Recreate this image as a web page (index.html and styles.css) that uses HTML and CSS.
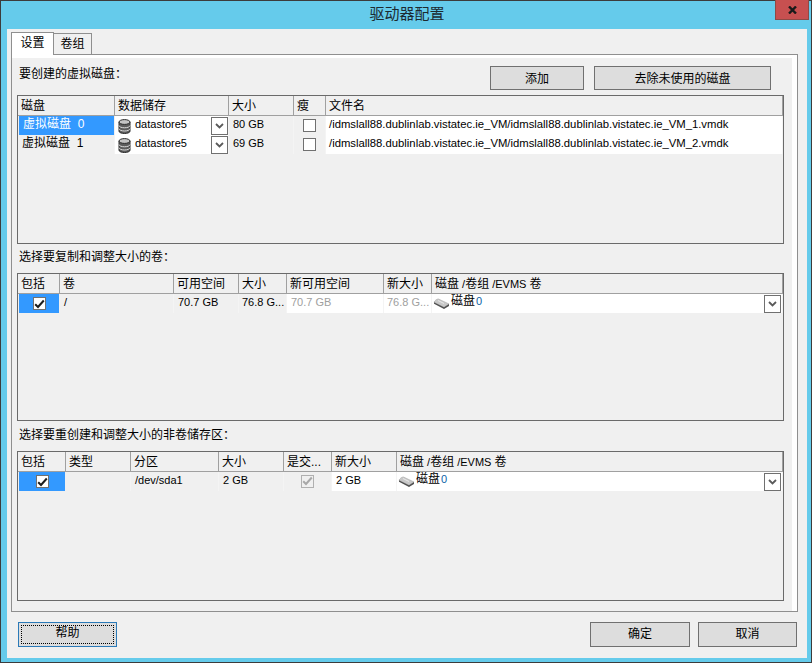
FILE: index.html
```html
<!DOCTYPE html>
<html lang="zh">
<head>
<meta charset="utf-8">
<title>驱动器配置</title>
<link rel="stylesheet" href="styles.css">
</head>
<body>
<svg class="defs" width="0" height="0">
  <defs>
    <symbol id="db" viewBox="0 0 13 15">
      <path d="M1 3v9.200c0 1.300 2.500 2.300 5.500 2.300s5.500-1 5.500-2.300V3z" fill="#5c5c5c" stroke="#2a2a2a"/>
      <ellipse cx="6.500" cy="3" rx="5.500" ry="2.400" fill="#c4c4c4" stroke="#2a2a2a"/>
      <path d="M1 6.500c0 1.300 2.500 2.300 5.500 2.300s5.500-1 5.500-2.300M1 9.700c0 1.300 2.500 2.300 5.500 2.300s5.500-1 5.500-2.300" fill="none" stroke="#dcdcdc"/>
    </symbol>
    <symbol id="hdd" viewBox="0 0 17 11">
      <path d="M1 4.200C2 2.500 3.500 1 5.500 1L16 6l-5 3.200z" fill="#c8c8c8" stroke="#a8a8a8" stroke-width=".6"/>
      <path d="M1 4.200v1.600L11 11l5-3V6l-5 3.200z" fill="#505050"/>
      <path d="M5 2.500l6 3" stroke="#e8e8e8" fill="none"/>
    </symbol>
    <symbol id="chev" viewBox="0 0 9 6">
      <path d="M1 1l3.500 3.500L8 1" fill="none" stroke="#5a5a5a" stroke-width="1.800"/>
    </symbol>
    <symbol id="tick" viewBox="0 0 11 10">
      <path d="M1.200 5.200 4 8 9.800 1.500" fill="none" stroke="currentColor" stroke-width="2"/>
    </symbol>
  </defs>
</svg>
<div class="window">
  <header class="titlebar">
    <h1 class="title">驱动器配置</h1>
    <div class="close"><svg width="9" height="8" viewBox="0 0 9 8"><path d="M1 .5l7 7M8 .5l-7 7" stroke="#1a1a1a" stroke-width="2.400" fill="none"/></svg></div>
  </header>
  <main class="client">
    <nav class="tabs">
      <div class="tab active">设置</div>
      <div class="tab">卷组</div>
    </nav>
    <section class="panel">
      <div class="panel-inner">
        <div class="top-row">
          <div class="label first">要创建的虚拟磁盘：</div>
          <button class="btn add">添加</button>
          <button class="btn remove">去除未使用的磁盘</button>
        </div>
        <div class="table t1">
          <div class="grid cols1">
            <div class="th">磁盘</div><div class="th">数据储存</div><div class="th">大小</div><div class="th">瘦</div><div class="th last">文件名</div>
            <div class="td sel disk-name">虚拟磁盘&nbsp; 0</div>
            <div class="td white store"><svg class="ic-db"><use href="#db"/></svg><span>datastore5</span><span class="drop"><svg class="ic-chev"><use href="#chev"/></svg></span></div>
            <div class="td num">80 GB</div>
            <div class="td center"><span class="cb"></span></div>
            <div class="td white path">/idmslall88.dublinlab.vistatec.ie_VM/idmslall88.dublinlab.vistatec.ie_VM_1.vmdk</div>
            <div class="td disk-name">虚拟磁盘&nbsp; 1</div>
            <div class="td white store"><svg class="ic-db"><use href="#db"/></svg><span>datastore5</span><span class="drop"><svg class="ic-chev"><use href="#chev"/></svg></span></div>
            <div class="td num">69 GB</div>
            <div class="td center"><span class="cb"></span></div>
            <div class="td white path">/idmslall88.dublinlab.vistatec.ie_VM/idmslall88.dublinlab.vistatec.ie_VM_2.vmdk</div>
          </div>
        </div>
        <div class="label second">选择要复制和调整大小的卷：</div>
        <div class="table t2">
          <div class="grid cols2">
            <div class="th">包括</div><div class="th">卷</div><div class="th">可用空间</div><div class="th">大小</div><div class="th">新可用空间</div><div class="th">新大小</div><div class="th last">磁盘<span class="lat"> /</span>卷组<span class="lat"> /EVMS </span>卷</div>
            <div class="td sel center"><span class="cb on"><svg class="ic-tick"><use href="#tick"/></svg></span></div>
            <div class="td num">/</div>
            <div class="td num">70.7 GB</div>
            <div class="td num tight">76.8 G...</div>
            <div class="td white num muted">70.7 GB</div>
            <div class="td white num muted tight">76.8 G...</div>
            <div class="td white disk"><svg class="ic-hdd"><use href="#hdd"/></svg><span>磁盘<span class="lat idx">0</span></span><span class="drop end"><svg class="ic-chev"><use href="#chev"/></svg></span></div>
          </div>
        </div>
        <div class="label third">选择要重创建和调整大小的非卷储存区：</div>
        <div class="table t3">
          <div class="grid cols3">
            <div class="th">包括</div><div class="th">类型</div><div class="th">分区</div><div class="th">大小</div><div class="th">是交...</div><div class="th">新大小</div><div class="th last">磁盘<span class="lat"> /</span>卷组<span class="lat"> /EVMS </span>卷</div>
            <div class="td sel center"><span class="cb on"><svg class="ic-tick"><use href="#tick"/></svg></span></div>
            <div class="td"></div>
            <div class="td num">/dev/sda1</div>
            <div class="td num">2 GB</div>
            <div class="td center"><span class="cb dis"><svg class="ic-tick"><use href="#tick"/></svg></span></div>
            <div class="td white num">2 GB</div>
            <div class="td white disk"><svg class="ic-hdd"><use href="#hdd"/></svg><span>磁盘<span class="lat idx">0</span></span><span class="drop end"><svg class="ic-chev"><use href="#chev"/></svg></span></div>
          </div>
        </div>
      </div>
    </section>
    <footer class="footer">
      <button class="btn help"><span class="focus">帮助</span></button>
      <button class="btn ok">确定</button>
      <button class="btn cancel">取消</button>
    </footer>
  </main>
</div>
</body>
</html>
```
FILE: styles.css
```css
* { box-sizing: border-box; }
html, body { margin: 0; padding: 0; }
body {
  width: 812px;
  height: 663px;
  overflow: hidden;
  font: 12px/16px "Liberation Sans", "Noto Sans CJK SC", sans-serif;
  color: #000;
}
.defs { position: absolute; }
.window {
  width: 812px;
  height: 663px;
  background: #65cbeb;
  border: 1px solid #3c3c3c;
  display: flex;
  flex-direction: column;
  padding: 0 4px 4px 6px;
}
.titlebar {
  height: 28px;
  flex: none;
  position: relative;
  display: flex;
  align-items: center;
  justify-content: center;
}
.title {
  margin: 0 0 5px;
  font: 400 15px/20px "Noto Sans CJK SC", sans-serif;
  color: #1c2a30;
}
.close {
  position: absolute;
  top: -1px;
  right: -2px;
  width: 34px;
  height: 20px;
  background: #c75050;
  border: 1px solid #8e4a45;
  border-top: 0;
  display: flex;
  align-items: center;
  justify-content: center;
  padding-top: 1px;
}
.client {
  flex: 1;
  background: #f0f0f0;
  padding: 3px 9px 0 4px;
  display: flex;
  flex-direction: column;
}
.tabs {
  display: flex;
  align-items: flex-end;
  height: 23px;
  position: relative;
  z-index: 1;
  flex: none;
}
.tab {
  width: 38px;
  height: 21px;
  border: 1px solid #8f8f8f;
  border-bottom: 0;
  border-left: 0;
  background: #f0f0f0;
  text-align: center;
  line-height: 20px;
  margin-bottom: 1px;
}
.tab.active {
  width: 43px;
  height: 23px;
  margin-bottom: 0;
  background: #fff;
  border-left: 1px solid #8f8f8f;
  line-height: 21px;
}
.panel {
  border: 1px solid #8f8f8f;
  background: #fff;
  padding: 3px 5px 0 0;
  height: 558px;
  margin-top: -1px;
  flex: none;
}
.panel-inner {
  background: #f0f0f0;
  height: 100%;
  padding: 8px 8px 0 5px;
}
.top-row {
  display: flex;
  height: 24px;
  align-items: center;
}
.label { line-height: 16px; }
.label.first { flex: 1; padding: 0 0 8px 2px; }
.label.second { height: 29px; padding-top: 5px; padding-left: 2px; }
.label.third { height: 30px; padding-top: 6px; padding-left: 2px; }
.btn {
  font: inherit;
  color: #000;
  background: #dddddd;
  border: 1px solid #707070;
  height: 24px;
  padding: 1px 0 0;
  border-radius: 0;
  display: block;
}
.btn.add { width: 94px; margin-right: 10px; }
.btn.remove { width: 177px; margin-right: 13px; }
.table {
  margin-top: 5px;
  width: 767px;
  border: 1px solid #6a6a6a;
  background: #f0f0f0;
}
.label + .table { margin-top: 0; }
.t1 { height: 149px; }
.t2 { height: 148px; }
.t3 { height: 150px; }
.grid {
  display: grid;
  grid-auto-rows: 19px;
  grid-template-rows: 20px;
}
.cols1 { grid-template-columns: 97px 114px 65px 32px 457px; }
.cols2 { grid-template-columns: 42px 114px 65px 48px 97px 48px 351px; }
.cols3 { grid-template-columns: 48px 65px 88px 65px 48px 65px 386px; }
.th {
  border-right: 1px solid #a0a0a0;
  border-bottom: 1px solid #a0a0a0;
  padding: 1px 0 0 3px;
  line-height: 18px;
  white-space: nowrap;
  overflow: hidden;
}
.lat { font-size: 11px; }
.idx { margin-left: 1px; color: #0b5fa8; }
.td {
  display: flex;
  align-items: center;
  white-space: nowrap;
  overflow: hidden;
  padding-left: 4px;
  padding-bottom: 4px;
  border-right: 1px solid #f4f4f4;
}
.td.num, .td.store { font-size: 11px; }
.td.white { background: #fff; }
.td.sel {
  background: #3399ff;
  color: #fff;
  margin: 0 1px;
  border-right: 0;
}
.td.center { justify-content: center; padding: 0 0 1px; }
.td.sel.center { padding: 0; }
.td.store { padding: 0 0 0 3px; }
.td.store span:first-of-type { margin-left: 4px; padding-bottom: 4px; }
.td.path { padding-left: 3px; font-size: 11.3px; }
.td.tight { padding-left: 3px; }
.td.muted { color: #a0a0a0; }
.td.disk { padding: 0 0 0 1px; }
.td.disk > span:first-of-type { margin-left: 1px; padding-bottom: 5px; }
.ic-db { width: 13px; height: 15px; flex: none; margin-top: 1px; }
.ic-hdd { width: 17px; height: 11px; flex: none; margin-top: 0; }
.drop {
  margin-left: auto;
  width: 17px;
  height: 18px;
  flex: none;
  background: #fff;
  border: 1px solid #707070;
  display: flex;
  align-items: center;
  justify-content: center;
}
.drop.end { margin-right: 1px; }
.ic-chev { width: 9px; height: 6px; }
.cb {
  width: 13px;
  height: 13px;
  background: #fff;
  border: 1px solid #707070;
  display: flex;
  align-items: center;
  justify-content: center;
}
.cb.on { color: #1c1c1c; }
.cb.dis { color: #a8a8a8; border-color: #b0b0b0; background: #f0f0f0; }
.ic-tick { width: 11px; height: 10px; }
.footer {
  display: flex;
  padding: 10px 0 0 7px;
  flex: none;
}
.footer .btn { height: 25px; padding-bottom: 3px; }
.btn.help {
  width: 99px;
  border-color: #2b7ab8;
  padding: 2px;
  margin-right: 473px;
}
.focus {
  display: flex;
  align-items: center;
  justify-content: center;
  height: 100%;
  border: 1px dotted #000;
  padding-bottom: 3px;
}
.btn.ok { width: 100px; margin-right: 8px; }
.btn.cancel { width: 99px; }
```
